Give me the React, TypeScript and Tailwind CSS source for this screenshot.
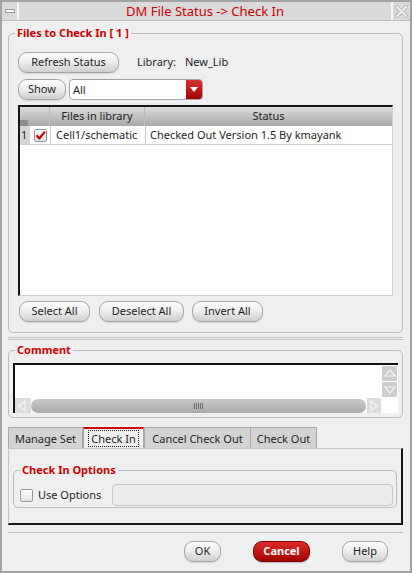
import React from "react";

// Okno dialogu "DM File Status -> Check In" w stylu starego toolkitu X11.
const btn =
  "h-[21px] rounded-[9px] border border-[#a6a6a6] bg-linear-to-b from-[#fdfdfd] via-[#ececec] to-[#cfcfcf] text-[11px] text-[#1e1e1e] flex items-center justify-center shadow-[0_1px_1px_rgba(0,0,0,0.12)]";

function Group({ title, className, children }: { title: string; className?: string; children: React.ReactNode }) {
  return (
    <fieldset className={"border border-[#bcbcbc] rounded-[5px] p-0 " + (className ?? "")}>
      <legend className="ml-[6px] px-[2px] text-[11px] leading-[16px] font-bold text-[#cc0000]">{title}</legend>
      {children}
    </fieldset>
  );
}

function RedCheck() {
  return (
    <div className="w-[13px] h-[13px] border border-[#9a9a9a] bg-linear-to-b from-white to-[#e4e4e4] rounded-[2px] flex items-center justify-center">
      <svg width="11" height="11" viewBox="0 0 11 11">
        <path d="M1.5 5.2 L4.3 8.5 L9.8 1.8" fill="none" stroke="#d10000" strokeWidth="2.2" strokeLinejoin="round" />
      </svg>
    </div>
  );
}

function Arrow({ dir }: { dir: "up" | "down" | "left" | "right" }) {
  const pts = {
    up: "2,9 7,3 12,9",
    down: "2,4 7,10 12,4",
    left: "9,2 3,7 9,12",
    right: "4,2 10,7 4,12",
  }[dir];
  return (
    <svg width="14" height="14" viewBox="0 0 14 14">
      <polygon points={pts} fill="none" stroke="#f4f4f4" strokeWidth="1.2" />
    </svg>
  );
}

export default function App() {
  return (
    <div className="w-[412px] h-[573px] bg-[#efefef] border-2 border-[#a3a3a3] flex flex-col font-['Noto_Sans',sans-serif] text-[11px] text-[#1e1e1e] overflow-hidden">
      {/* pasek tytułu */}
      <div className="h-[19px] flex bg-[#d9d9d9] border-b border-[#bcbcbc] shrink-0">
        <div className="w-[17px] flex items-center justify-center border-r-2 border-r-[#f7f7f7]">
          <div className="w-[10px] h-[4px] bg-[#f8f8f8] border border-[#9c9c9c]" />
        </div>
        <div className="flex-1 flex items-center justify-center text-[13px] text-[#cc0000] leading-none pt-[1px]">
          DM File Status -&gt; Check In
        </div>
        <div className="w-[19px] flex items-center justify-center border-l-2 border-l-[#f7f7f7]">
          <svg width="13" height="13" viewBox="0 0 13 13">
            <path d="M2 2 L11 11 M11 2 L2 11" stroke="#bdbdbd" strokeWidth="4" strokeLinecap="round" />
            <path d="M2 2 L11 11 M11 2 L2 11" stroke="#ececec" strokeWidth="2" strokeLinecap="round" />
          </svg>
        </div>
      </div>

      {/* pliki do zaewidencjonowania */}
      <Group title="Files to Check In [ 1 ]" className="mt-[4px] ml-[6px] w-[395px]">
        <div className="px-[9px] pt-[11px] pb-[10px]">
          <div className="flex items-center h-[20px]">
            <button className={btn + " w-[101px] h-[20px]"}>Refresh Status</button>
            <span className="ml-[18px]">Library:</span>
            <span className="ml-[9px]">New_Lib</span>
          </div>
          <div className="flex items-center mt-[7px] h-[21px]">
            <button className={btn + " w-[48px]"}>Show</button>
            <div className="ml-[3px] w-[134px] h-[21px] flex rounded-[4px] border border-[#a2a2a2] bg-white overflow-hidden">
              <span className="flex-1 pl-[3px] leading-[19px]">All</span>
              <div className="w-[16px] bg-linear-to-b from-[#d83030] to-[#9e0000] flex items-center justify-center">
                <svg width="8" height="5" viewBox="0 0 8 5">
                  <polygon points="0,0 8,0 4,5" fill="#fff" />
                </svg>
              </div>
            </div>
          </div>

          {/* tabela */}
          <div className="mt-[5px] w-[375px] h-[191px] bg-white border-l-2 border-t-2 border-[#161616] border-r border-b border-r-[#cfcfcf] border-b-[#cfcfcf] flex flex-col">
            <div className="h-[19px] flex bg-linear-to-b from-[#dcdcdc] to-[#a9a9a9]">
              <div className="w-[10px] flex flex-col justify-end">
                <div className="h-[6px] w-[8px] bg-[#8d8d8d]" />
              </div>
              <div className="w-[20px] border-r border-[#bdbdbd]" />
              <div className="w-[95px] border-r border-[#bdbdbd] flex items-center justify-center">Files in library</div>
              <div className="flex-1 flex items-center justify-center">Status</div>
            </div>
            <div className="h-[19px] flex border-b border-[#cfcfcf]">
              <div className="w-[10px] bg-[#d6d6d6] flex items-center pl-[1px]">1</div>
              <div className="w-[20px] flex items-center justify-center">
                <RedCheck />
              </div>
              <div className="w-[95px] border-l border-[#cfcfcf] flex items-center pl-[5px] whitespace-nowrap">Cell1/schematic</div>
              <div className="flex-1 border-l border-[#cfcfcf] flex items-center pl-[4px] whitespace-nowrap">Checked Out Version 1.5 By kmayank</div>
            </div>
          </div>

          <div className="flex mt-[5px]">
            <button className={btn + " ml-[1px] w-[71px]"}>Select All</button>
            <button className={btn + " ml-[9px] w-[85px]"}>Deselect All</button>
            <button className={btn + " ml-[8px] w-[71px]"}>Invert All</button>
          </div>
        </div>
      </Group>

      <div className="mt-[4px] ml-[6px] w-[395px] h-[3px] border-y border-[#c2c2c2] shrink-0" />

      {/* komentarz */}
      <Group title="Comment" className="mt-[2px] ml-[6px] w-[395px]">
        <div className="px-[4px] pt-[5px] pb-[4px]">
          <div className="h-[50px] bg-white border-t-2 border-l-2 border-[#111] flex flex-col">
            <div className="flex-1 flex">
              <div className="flex-1" />
              <div className="w-[17px] flex flex-col gap-[1px] pt-[1px] pl-[1px]">
                <div className="w-[15px] h-[15px] bg-[#cdcdcd] flex items-center justify-center"><Arrow dir="up" /></div>
                <div className="w-[15px] h-[15px] bg-[#cdcdcd] flex items-center justify-center"><Arrow dir="down" /></div>
              </div>
            </div>
            <div className="h-[15px] flex items-center">
              <div className="w-[16px] h-[15px] flex items-center justify-center bg-[#dcdcdc]"><Arrow dir="left" /></div>
              <div className="flex-1 h-[14px] rounded-full bg-linear-to-b from-[#c9c9c9] to-[#a9a9a9] flex items-center justify-center">
                <div className="flex gap-[1px]">
                  {[0, 1, 2, 3, 4].map((i) => (
                    <div key={i} className="w-[1px] h-[6px] bg-[#6f6f6f]" />
                  ))}
                </div>
              </div>
              <div className="ml-[1px] w-[14px] h-[15px] flex items-center justify-center bg-[#dcdcdc]"><Arrow dir="right" /></div>
              <div className="w-[17px]" />
            </div>
          </div>
        </div>
      </Group>

      {/* zakładki */}
      <div className="mt-[9px] ml-[6px] flex h-[21px] shrink-0 whitespace-nowrap">
        <div className="w-[75px] border border-b-0 border-[#a9a9a9] bg-[#d3d3d3] flex items-center justify-center pt-[2px]">Manage Set</div>
        <div className="w-[61px] border-x border-[#a9a9a9] border-t-2 border-t-[#cc0000] bg-[#efefef] flex items-center justify-center">
          <span className="border border-dotted border-[#222] px-[2px] leading-[15px]">Check In</span>
        </div>
        <div className="w-[107px] border border-b-0 border-[#a9a9a9] bg-[#d3d3d3] flex items-center justify-center pt-[2px]">Cancel Check Out</div>
        <div className="w-[66px] border border-b-0 border-l-0 border-[#a9a9a9] bg-[#d3d3d3] flex items-center justify-center pt-[2px]">Check Out</div>
      </div>
      <div className="ml-[6px] w-[395px] h-[77px] border-l border-t border-[#c4c4c4] border-r-2 border-b-2 border-r-[#151515] border-b-[#151515] px-[4px] pt-[13px] shrink-0">
        <Group title="Check In Options" className="w-[384px]">
          <div className="flex items-center pl-[6px] pt-[6px] pb-[1px] h-[29px] whitespace-nowrap">
            <div className="w-[13px] h-[13px] border border-[#9a9a9a] bg-linear-to-b from-white to-[#e2e2e2] rounded-[2px]" />
            <span className="ml-[5px] w-[74px]">Use Options</span>
            <div className="w-[281px] h-[22px] rounded-[4px] border border-[#c6c6c6] bg-[#ececec]" />
          </div>
        </Group>
      </div>

      <div className="mt-[7px] ml-[6px] w-[395px] border-t border-[#c2c2c2] shrink-0" />

      <div className="mt-[8px] flex justify-end gap-[32px] pr-[22px]">
        <button className={btn + " w-[37px]"}>OK</button>
        <button className="w-[57px] h-[21px] rounded-[9px] border border-[#7a0000] bg-linear-to-b from-[#dd2a2a] to-[#a30000] text-[11px] font-bold text-white flex items-center justify-center shadow-[0_1px_1px_rgba(0,0,0,0.2)]">
          Cancel
        </button>
        <button className={btn + " w-[46px]"}>Help</button>
      </div>
    </div>
  );
}
